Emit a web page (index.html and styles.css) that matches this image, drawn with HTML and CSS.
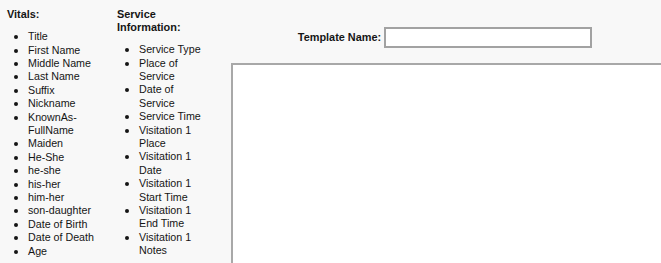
FILE: index.html
```html
<!DOCTYPE html>
<html>
<head>
<meta charset="utf-8" />
<title>Template Editor</title>
<link rel="stylesheet" href="styles.css">
</head>
<body>
<div class="page">

<div class="fields vitals">
  <div class="fieldHead">Vitals:</div>
  <ul class="fieldList">
    <li>Title</li>
    <li>First Name</li>
    <li>Middle Name</li>
    <li>Last Name</li>
    <li>Suffix</li>
    <li>Nickname</li>
    <li>KnownAs-FullName</li>
    <li>Maiden</li>
    <li>He-She</li>
    <li>he-she</li>
    <li>his-her</li>
    <li>him-her</li>
    <li>son-daughter</li>
    <li>Date of Birth</li>
    <li>Date of Death</li>
    <li>Age</li>
  </ul>
</div>

<div class="fields service">
  <div class="fieldHead">Service Information:</div>
  <ul class="fieldList">
    <li>Service Type</li>
    <li>Place of Service</li>
    <li>Date of Service</li>
    <li>Service Time</li>
    <li>Visitation 1 Place</li>
    <li>Visitation 1 Date</li>
    <li>Visitation 1 Start Time</li>
    <li>Visitation 1 End Time</li>
    <li>Visitation 1 Notes</li>
  </ul>
</div>

<div class="editor">
  <div class="nameRow">
    <label for="txtName" class="nameLabel">Template Name:</label>
    <input type="text" id="txtName" name="txtName" class="nameInput" />
  </div>
  <textarea name="body" id="body" class="bodyText"></textarea>
</div>

</div>
</body>
</html>
```

FILE: styles.css
```css
html, body {
  margin: 0;
  padding: 0;
  background-color: #f8f8f8;
  overflow: hidden;
}

body {
  font-family: "Liberation Sans", Arial, sans-serif;
  font-size: 10.7px;
  line-height: 13.4px;
  color: #151515;
}

.page {
  display: flex;
  align-items: flex-start;
  padding: 7.6px 0 0 7px;
  width: 700px;
}

.fields {
  flex: none;
}

.vitals {
  width: 110px;
}

.vitals .fieldList {
  padding-left: 21px;
}

.service {
  width: 92px;
}

.service .fieldList {
  padding-left: 22px;
}

.fieldHead {
  font-weight: bold;
  font-size: 10.9px;
  line-height: 13px;
}

.fieldList {
  margin: 9.5px 0 0 0;
  list-style: disc;
}

.fieldList li::marker {
  font-size: 12.5px;
}

.editor {
  flex: none;
  width: 440px;
  margin-left: 22px;
  padding-top: 19.4px;
}

.nameRow {
  display: flex;
  align-items: center;
  justify-content: center;
  gap: 3px;
  width: 428px;
}

.nameLabel {
  font-weight: bold;
  font-size: 10.9px;
}

.nameInput {
  width: 208px;
  height: 21px;
  box-sizing: border-box;
  margin: 0;
  border: 2px solid #a2a2a2;
  background-color: #fff;
}

.bodyText {
  display: block;
  box-sizing: border-box;
  margin: 15px 0 0 0;
  width: 440px;
  height: 220px;
  border: 2px solid #a8a8a8;
  background-color: #fff;
  resize: none;
}
```
